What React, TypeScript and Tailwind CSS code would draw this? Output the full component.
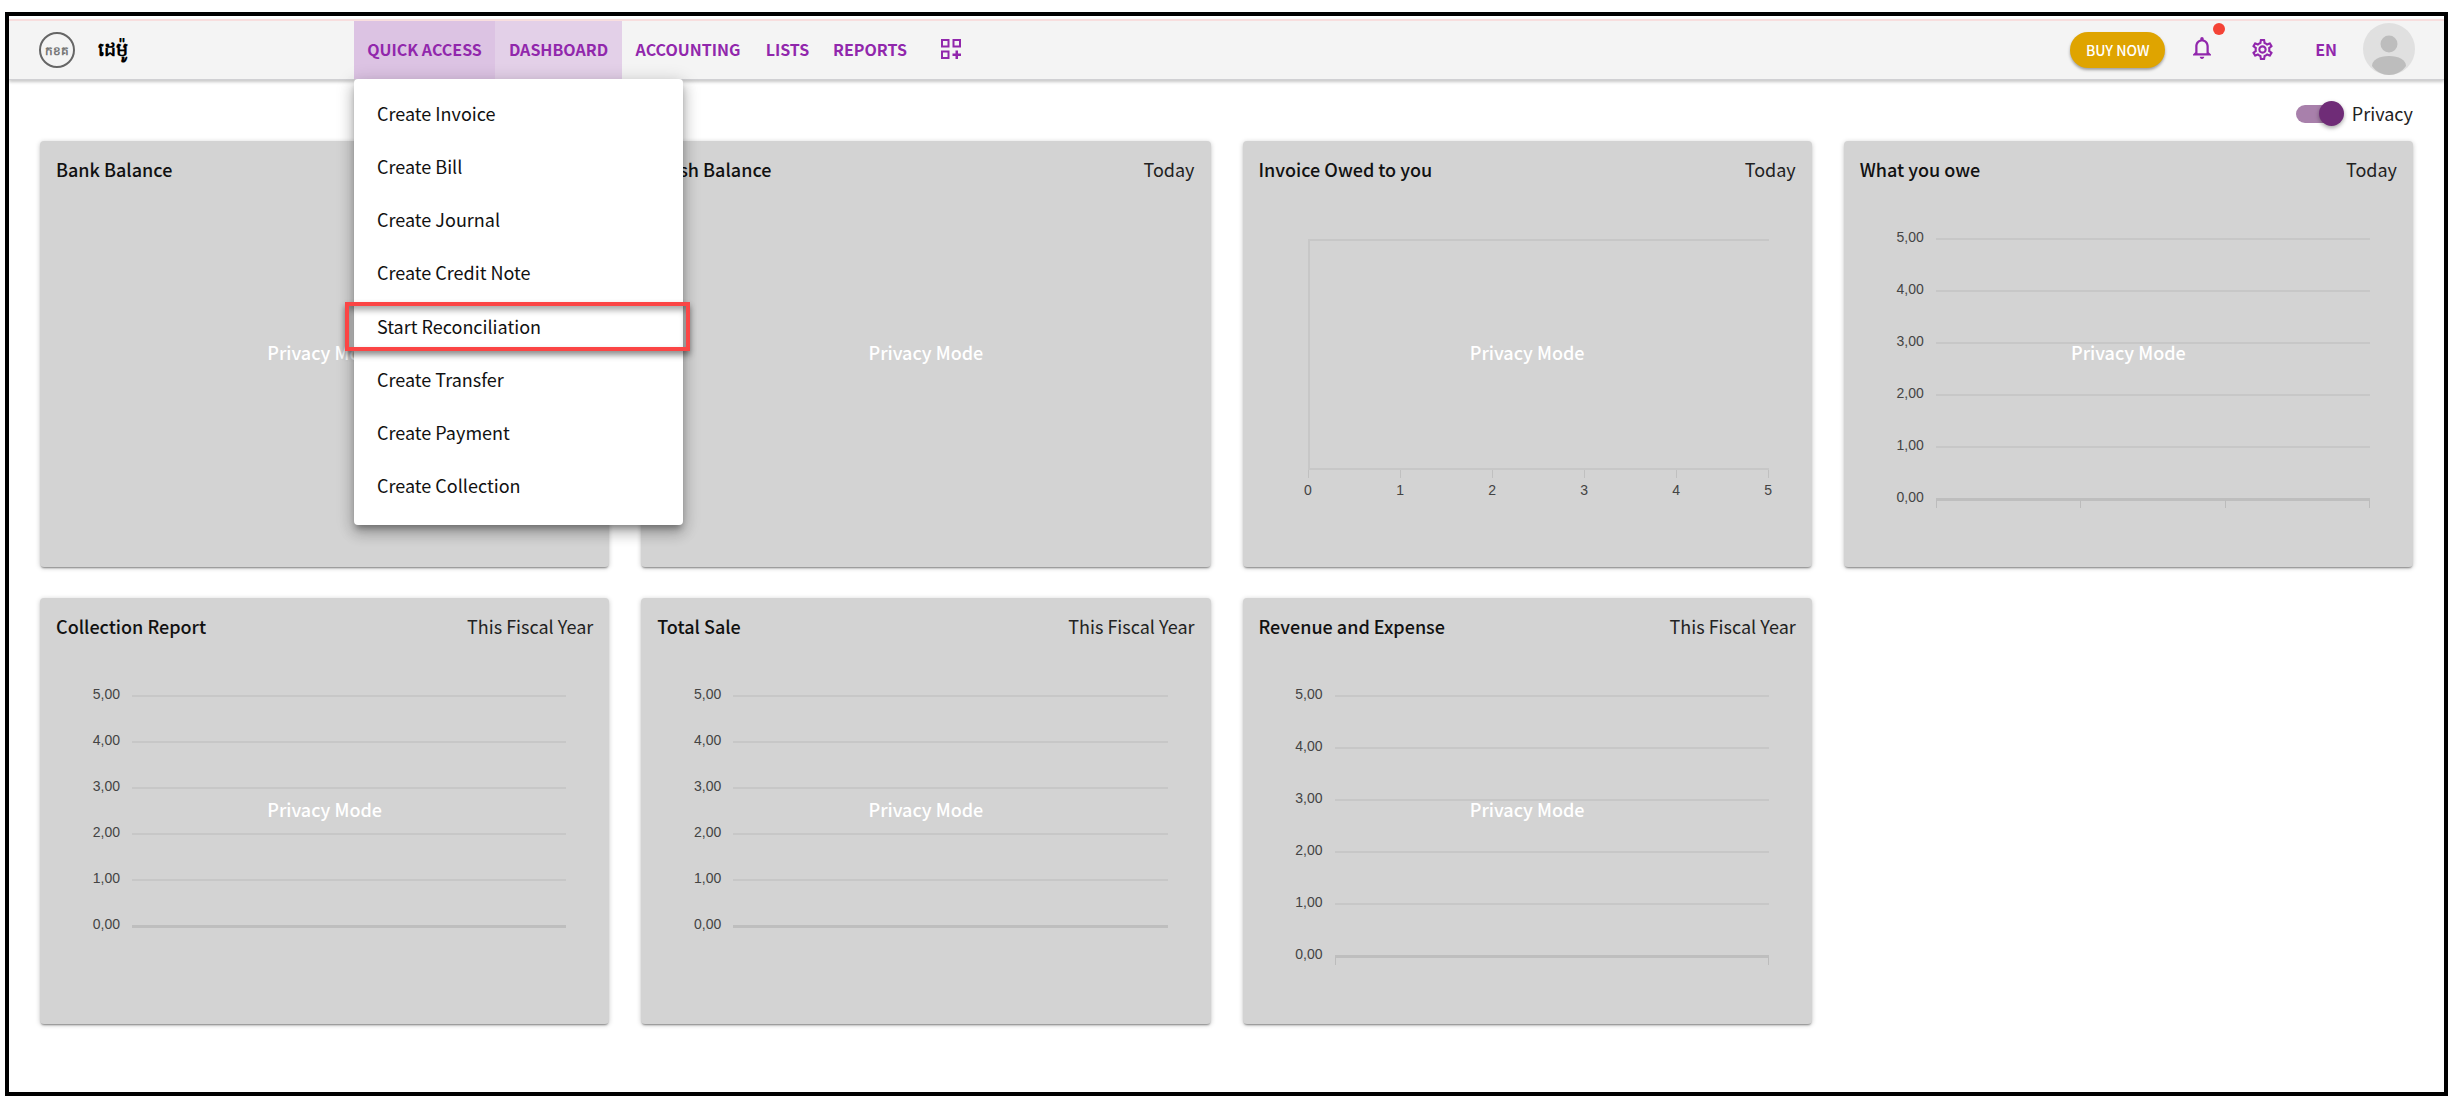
import React, { useState } from "react";

const menuItems = [
  "Create Invoice",
  "Create Bill",
  "Create Journal",
  "Create Credit Note",
  "Start Reconciliation",
  "Create Transfer",
  "Create Payment",
  "Create Collection",
];

const levels = ["5,00", "4,00", "3,00", "2,00", "1,00", "0,00"];

function LineChart({ tall = false, ticks = 0 }: { tall?: boolean; ticks?: number }) {
  return (
    <div className="pr-[43px] font-['Liberation_Sans',Arial,sans-serif] text-sm text-[#444]">
      {levels.map((label, i) => {
        const last = i === levels.length - 1;
        return (
          <div key={label} className={`flex items-center gap-3 ${tall ? "h-[52px]" : "h-[46px]"}`}>
            <span className="w-20 pb-1 text-right leading-4">{label}</span>
            <div className={`relative flex-1 ${last ? "h-[3px] bg-[#bebebe]" : "h-[2px] bg-[#c7c7c7]"}`}>
              {last && ticks > 0 && (
                <div className="absolute inset-x-0 top-[2px] flex h-2 justify-between">
                  {Array.from({ length: ticks }, (_, t) => (
                    <span key={t} className="w-px bg-[#bcbcbc]" />
                  ))}
                </div>
              )}
            </div>
          </div>
        );
      })}
    </div>
  );
}

function EmptyAxisChart() {
  return (
    <div className="pr-[43px] pl-[65px] font-['Liberation_Sans',Arial,sans-serif] text-sm text-[#444]">
      <div className="h-[231px] border-y-2 border-l-2 border-[#c7c7c7]" />
      <div className="flex justify-between">
        {[0, 1, 2, 3, 4, 5].map((n) => (
          <div key={n} className="flex w-px flex-col items-center">
            <span className="h-2 w-px bg-[#c0c0c0]" />
            <span className="mt-1 leading-4">{n}</span>
          </div>
        ))}
      </div>
    </div>
  );
}

function Card({ title, period, children }: { title: string; period?: string; children?: React.ReactNode }) {
  return (
    <section className="relative h-[426px] rounded-[4px] bg-[#d3d3d3] shadow-[0_2px_2px_-1px_rgba(0,0,0,0.4),0_1px_5px_rgba(0,0,0,0.22)]">
      <div className="flex h-14 items-center justify-between px-4 text-[18px]">
        <h2 className="font-medium text-[#111]">{title}</h2>
        {period && <span className="text-[#222]">{period}</span>}
      </div>
      {children}
      <div className="absolute inset-0 flex items-center justify-center pb-1 text-[18px] font-medium text-white">
        Privacy Mode
      </div>
    </section>
  );
}

function WidgetsIcon() {
  return (
    <svg viewBox="0 0 20 20" className="size-5" fill="none" stroke="currentColor" strokeWidth="2">
      <path d="M1 1h6.500v6.500H1zM12.500 1H19v6.500h-6.500zM1 12.500h6.500V19H1z" />
      <path d="M15.750 11.500v8.500M11.500 15.750H20" strokeWidth="2.500" />
    </svg>
  );
}

function BellIcon() {
  return (
    <svg viewBox="4 2.500 16 19.500" className="h-[22px] w-[18px]" fill="currentColor">
      <path d="M12 22c1.100 0 2-.9 2-2h-4c0 1.100.9 2 2 2zm6-6v-5c0-3.070-1.630-5.640-4.500-6.320V4c0-.83-.67-1.500-1.500-1.500s-1.500.67-1.500 1.500v.68C7.640 5.360 6 7.920 6 11v5l-2 2v1h16v-1l-2-2zm-2 1H8v-6c0-2.480 1.510-4.500 4-4.500s4 2.020 4 4.500v6z" />
    </svg>
  );
}

function GearIcon() {
  return (
    <svg viewBox="2 2 20 20" className="size-[21px]" fill="currentColor">
      <path d="M19.430 12.980c.04-.32.07-.64.07-.98 0-.34-.03-.66-.07-.98l2.110-1.650c.19-.15.24-.42.12-.64l-2-3.460c-.09-.16-.26-.25-.44-.25-.06 0-.12.01-.17.03l-2.490 1c-.52-.4-1.080-.73-1.690-.98l-.38-2.650C14.460 2.180 14.250 2 14 2h-4c-.25 0-.46.18-.49.42l-.38 2.650c-.61.25-1.170.59-1.690.98l-2.490-1c-.06-.02-.12-.03-.18-.03-.17 0-.34.09-.43.25l-2 3.460c-.13.22-.07.49.12.64l2.110 1.650c-.04.32-.07.65-.07.98 0 .33.03.66.07.98l-2.110 1.650c-.19.15-.24.42-.12.64l2 3.460c.09.16.26.25.44.25.06 0 .12-.01.17-.03l2.490-1c.52.4 1.080.73 1.690.98l.38 2.650c.03.24.24.42.49.42h4c.25 0 .46-.18.49-.42l.38-2.650c.61-.25 1.170-.59 1.690-.98l2.490 1c.06.02.12.03.18.03.17 0 .34-.09.43-.25l2-3.460c.12-.22.07-.49-.12-.64l-2.110-1.650zm-1.980-1.710c.04.31.05.52.05.73 0 .21-.02.43-.05.73l-.14 1.130.89.7 1.080.84-.7 1.210-1.270-.51-1.040-.42-.9.68c-.43.32-.84.56-1.250.73l-1.060.43-.16 1.130-.2 1.350h-1.400l-.19-1.350-.16-1.130-1.060-.43c-.43-.18-.83-.41-1.230-.71l-.91-.7-1.060.43-1.270.51-.7-1.210 1.080-.84.89-.7-.14-1.130c-.03-.31-.05-.54-.05-.74s.02-.43.05-.73l.14-1.130-.89-.7-1.080-.84.7-1.210 1.270.51 1.040.42.9-.68c.43-.32.84-.56 1.250-.73l1.060-.43.16-1.130.2-1.350h1.390l.19 1.350.16 1.130 1.060.43c.43.18.83.41 1.230.71l.91.7 1.060-.43 1.270-.51.7 1.210-1.070.85-.89.7.14 1.130zM12 8c-2.210 0-4 1.790-4 4s1.790 4 4 4 4-1.790 4-4-1.790-4-4-4zm0 6c-1.100 0-2-.9-2-2s.9-2 2-2 2 .9 2 2-.9 2-2 2z" />
    </svg>
  );
}

function Avatar() {
  return (
    <svg viewBox="0 0 52 52" className="size-[52px]">
      <circle cx="26" cy="26" r="26" fill="#e0e0e0" />
      <circle cx="26" cy="21" r="8.500" fill="#bdbdbd" />
      <path d="M9 43c0-6 7-10 17-10s17 4 17 10c-4 6-11 9-17 9s-13-3-17-9z" fill="#bdbdbd" />
    </svg>
  );
}

export default function App() {
  const [privacy, setPrivacy] = useState(true);
  return (
    <div className="min-h-screen bg-white pt-3 pr-[6px] pb-[6px] pl-[5px] font-['Noto_Sans_CJK_SC','Noto_Sans',sans-serif] text-black">
      <div className="min-h-[1084px] border-4 border-black pt-[3px]">
        <header className="relative z-10 flex h-[61px] items-stretch border-t-2 border-b border-t-[#f8dede] border-b-[#d0d0d3] bg-[#f4f4f4] shadow-[0_2px_3px_rgba(0,0,0,0.22)]">
          <div className="flex w-[345px] items-center gap-[23px] pl-[30px]">
            <div className="flex size-9 items-center justify-center rounded-full border-2 border-[#666] text-[12px] font-bold text-[#777]">
              កខគ
            </div>
            <span className="pb-1 text-[19px] font-bold">ដេម៉ូ</span>
          </div>
          <nav className="flex text-[16px] font-bold text-[#9127ac]">
            <div className="relative flex">
              <button className="w-[141px] bg-[#dcc3e3] pb-[3px]">QUICK ACCESS</button>
              <div className="absolute top-full left-0 w-[329px] rounded-[4px] bg-white pt-2 pb-3 text-[18px] font-normal text-[#111] shadow-[0_5px_6px_-2px_rgba(0,0,0,0.3),0_8px_14px_1px_rgba(0,0,0,0.18),0_3px_18px_2px_rgba(0,0,0,0.14)]">
                <ul className="grid h-[426px] grid-rows-8">
                  {menuItems.map((item) => (
                    <li key={item} className="relative flex">
                      <button className="flex flex-1 items-center pb-px pl-[23px] text-left">{item}</button>
                      {item === "Start Reconciliation" && (
                        <div className="pointer-events-none absolute -right-[7px] -left-[9px] inset-y-[2px] border-4 border-[#fb4545] shadow-[0_4px_6px_rgba(0,0,0,0.45),inset_0_4px_6px_rgba(0,0,0,0.35)]" />
                      )}
                    </li>
                  ))}
                </ul>
              </div>
            </div>
            <button className="w-[127px] bg-[#e3d0e8] pb-[3px]">DASHBOARD</button>
            <button className="w-[132px] pb-[3px]">ACCOUNTING</button>
            <button className="w-[67px] pb-[3px]">LISTS</button>
            <button className="w-[98px] pb-[3px]">REPORTS</button>
            <button aria-label="Add widget" className="flex w-[64px] items-center justify-center pb-[2px]">
              <WidgetsIcon />
            </button>
          </nav>
          <div className="ml-auto flex items-center pr-[29px] text-[#9127ac]">
            <button className="h-9 w-[95px] rounded-full bg-[#dfa400] text-[14px] font-medium text-white shadow-[0_2px_3px_rgba(0,0,0,0.35)]">
              BUY NOW
            </button>
            <button aria-label="Notifications" className="relative ml-7 pb-1">
              <BellIcon />
              <span className="absolute -top-[14px] -right-[14px] size-3 rounded-full bg-[#f44336]" />
            </button>
            <button aria-label="Settings" className="ml-[41px] pb-[2px]">
              <GearIcon />
            </button>
            <button className="ml-[42px] pb-[3px] text-[16px] font-bold">EN</button>
            <button aria-label="Account" className="ml-[26px] pb-[2px]">
              <Avatar />
            </button>
          </div>
        </header>

        <main className="px-[31px]">
          <div className="flex h-[61px] items-center justify-end pt-[6px]">
            <label className="flex cursor-pointer items-center gap-2 text-[18px] text-[#222]">
              <span className="relative flex h-[25px] w-12 items-center">
                <input
                  type="checkbox"
                  checked={privacy}
                  onChange={(e) => setPrivacy(e.target.checked)}
                  className="peer absolute inset-0 cursor-pointer opacity-0"
                />
                <span className="h-[18px] w-[44px] rounded-full bg-[#a880ab]" />
                <span className="pointer-events-none absolute left-0 size-[25px] rounded-full bg-[#6f2c77] shadow-[0_2px_4px_rgba(0,0,0,0.35)] peer-checked:left-[23px]" />
              </span>
              Privacy
            </label>
          </div>
          <div className="grid grid-cols-4 gap-x-8 gap-y-[31px]">
            <Card title="Bank Balance" />
            <Card title="Cash Balance" period="Today" />
            <Card title="Invoice Owed to you" period="Today">
              <div className="pt-[42px]">
                <EmptyAxisChart />
              </div>
            </Card>
            <Card title="What you owe" period="Today">
              <div className="pt-4">
                <LineChart tall ticks={4} />
              </div>
            </Card>
            <Card title="Collection Report" period="This Fiscal Year">
              <div className="pt-[19px]">
                <LineChart />
              </div>
            </Card>
            <Card title="Total Sale" period="This Fiscal Year">
              <div className="pt-[19px]">
                <LineChart />
              </div>
            </Card>
            <Card title="Revenue and Expense" period="This Fiscal Year">
              <div className="pt-4">
                <LineChart tall ticks={2} />
              </div>
            </Card>
          </div>
        </main>
      </div>
    </div>
  );
}
